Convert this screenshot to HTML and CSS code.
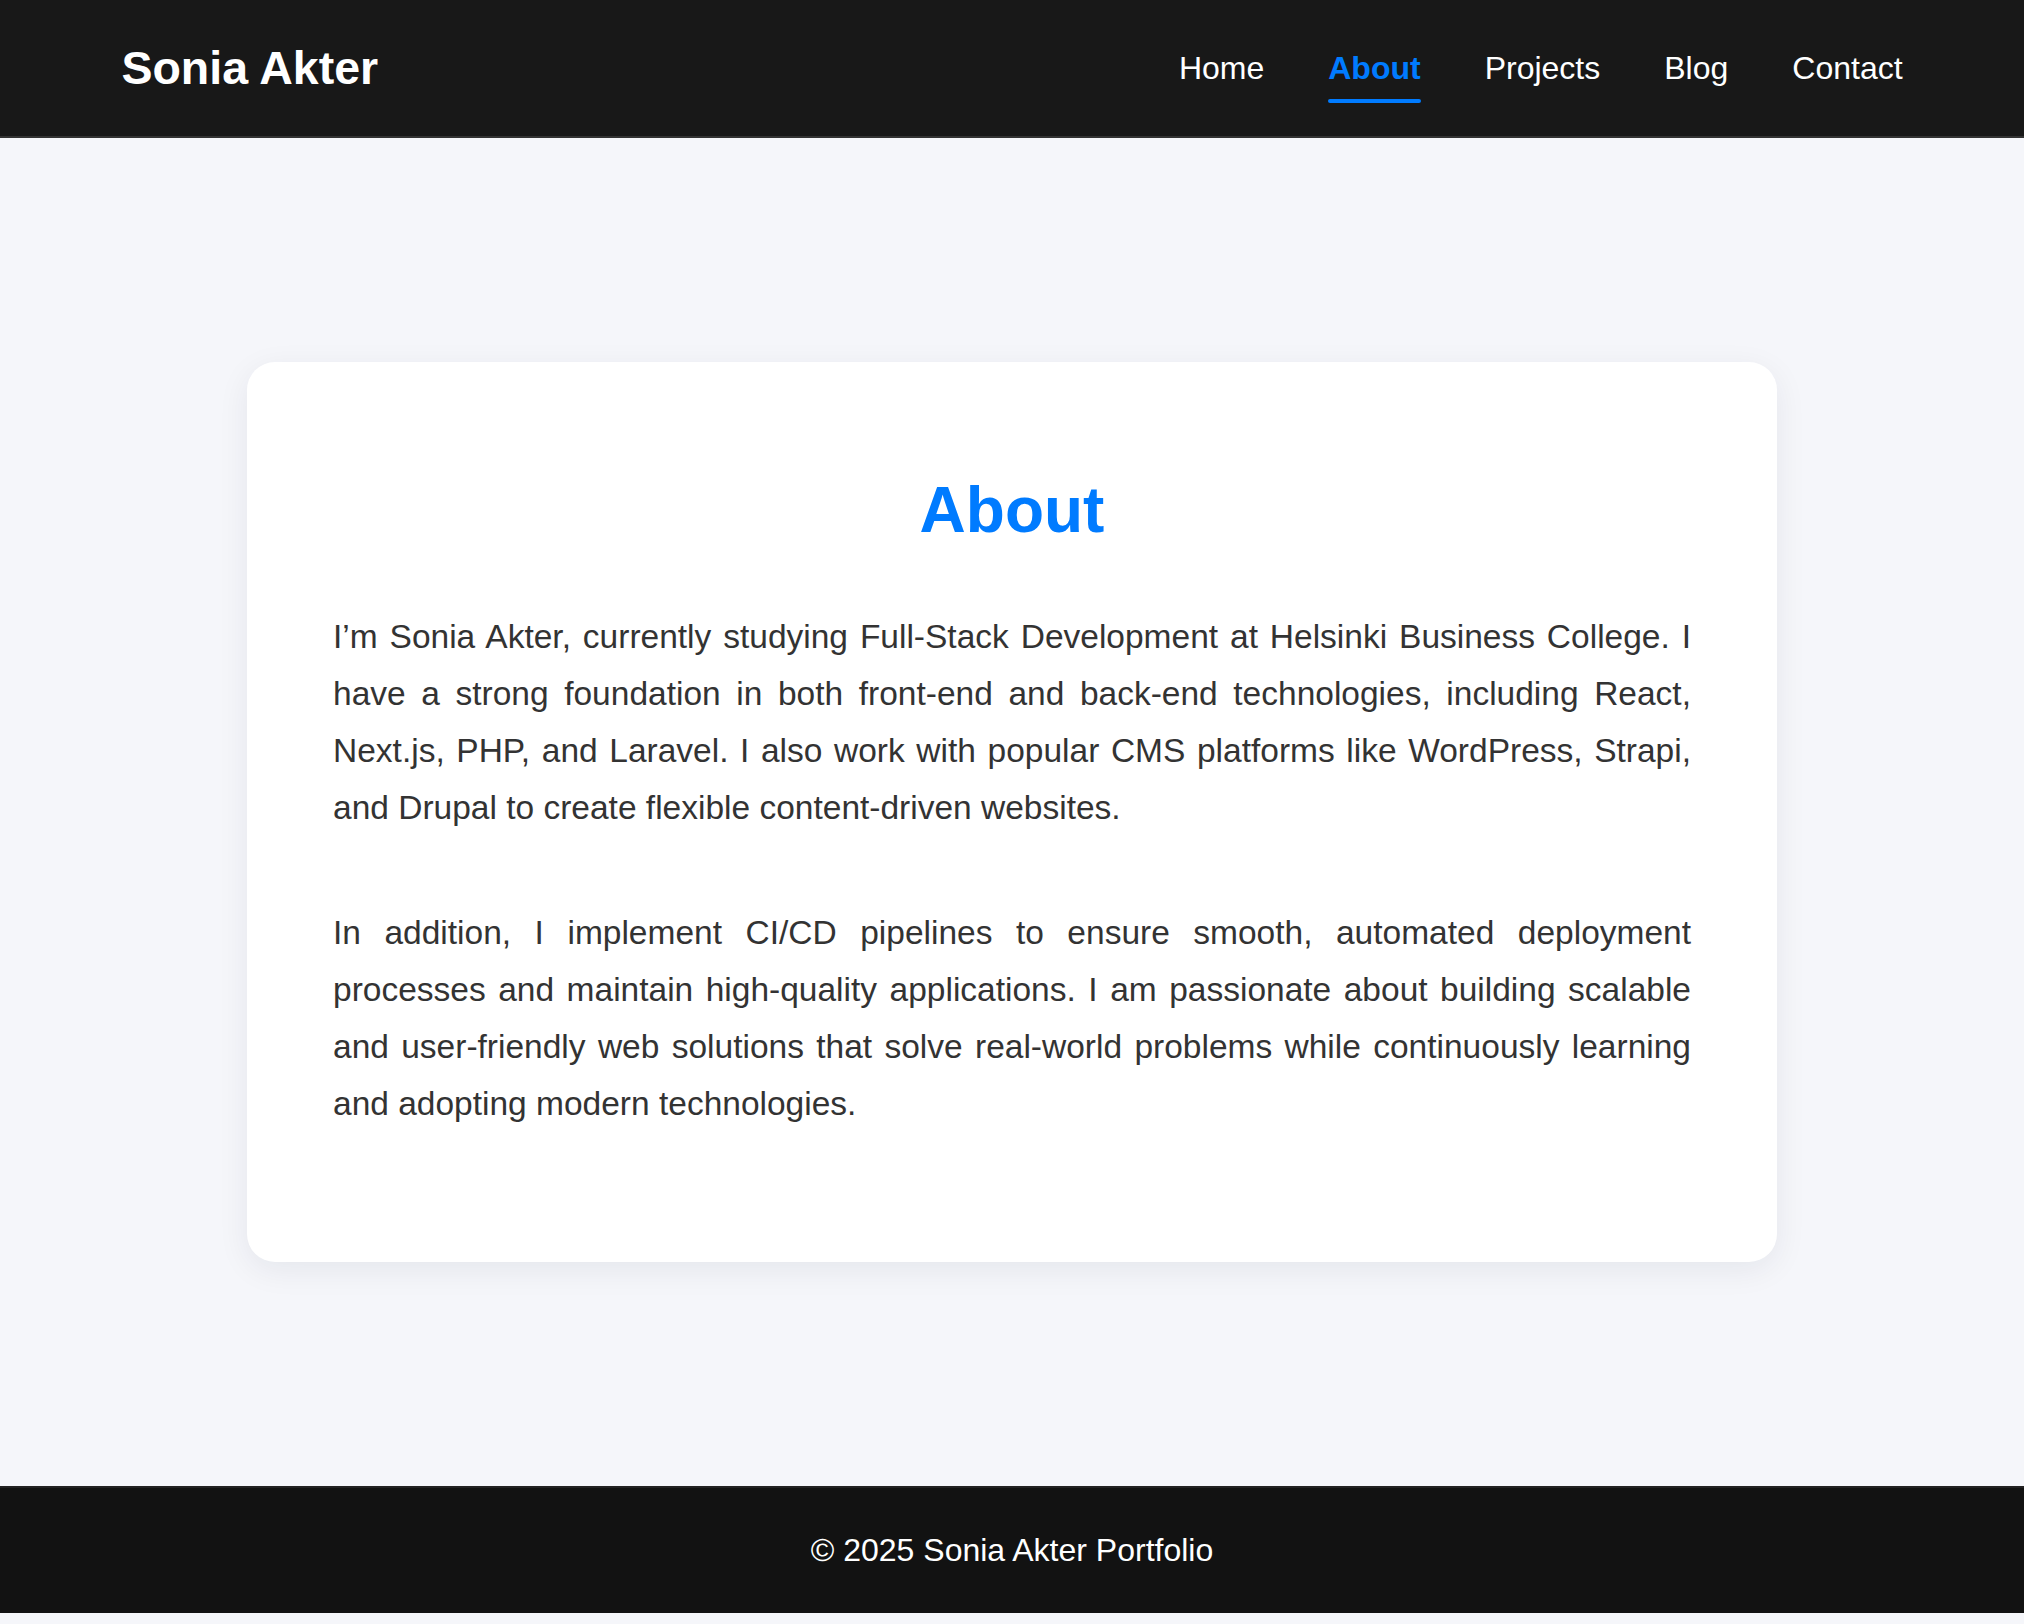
FILE: index.html
```html
<!DOCTYPE html>
<html lang="en">
<head>
<meta charset="utf-8">
<title>About - Sonia Akter</title>
<link rel="stylesheet" href="styles.css">
</head>
<body>
<header class="site-header">
  <div class="logo">Sonia Akter</div>
  <nav class="main-nav">
    <ul class="nav-list">
      <li><a href="#" class="nav-link">Home</a></li>
      <li><a href="#" class="nav-link active">About</a></li>
      <li><a href="#" class="nav-link">Projects</a></li>
      <li><a href="#" class="nav-link">Blog</a></li>
      <li><a href="#" class="nav-link">Contact</a></li>
    </ul>
  </nav>
</header>
<main class="content">
  <section class="card">
    <h2 class="card-title">About</h2>
    <p class="card-text">I’m Sonia Akter, currently studying Full-Stack Development at Helsinki Business College. I have a strong foundation in both front-end and back-end technologies, including React, Next.js, PHP, and Laravel. I also work with popular CMS platforms like WordPress, Strapi, and Drupal to create flexible content-driven websites.</p>
    <p class="card-text">In addition, I implement CI/CD pipelines to ensure smooth, automated deployment processes and maintain high-quality applications. I am passionate about building scalable and user-friendly web solutions that solve real-world problems while continuously learning and adopting modern technologies.</p>
  </section>
</main>
<footer class="site-footer">
  <p class="footer-text">© 2025 Sonia Akter Portfolio</p>
</footer>
</body>
</html>
```
FILE: styles.css
```css
* {
  box-sizing: border-box;
}

body {
  margin: 0;
  padding-bottom: 11px;
  background: #f5f6fa;
  font-family: "Liberation Sans", Arial, Helvetica, sans-serif;
  color: #333;
}

.site-header {
  height: 138px;
  background: #181818;
  border-bottom: 2px solid #333;
  display: flex;
  align-items: center;
  justify-content: space-between;
  padding: 0 6%;
}

.logo {
  color: #fff;
  font-size: 46.5px;
  font-weight: 700;
}

.nav-list {
  list-style: none;
  margin: 0;
  padding: 0;
  display: flex;
  gap: 64px;
}

.nav-link {
  position: relative;
  display: block;
  color: #fff;
  text-decoration: none;
  font-size: 32px;
}

.nav-link.active {
  color: #007bff;
  font-weight: 700;
}

.nav-link.active::after {
  content: "";
  position: absolute;
  left: 0;
  right: 0;
  bottom: -16px;
  height: 4px;
  border-radius: 2px;
  background: #007bff;
}

.content {
  padding: 224px 0;
}

.card {
  width: 1530px;
  margin: 0 auto;
  background: #fff;
  border-radius: 28px;
  padding: 64px 86px 61px;
  box-shadow: 0 8px 32px rgba(20, 30, 60, 0.07);
}

.card-title {
  margin: 47px 0 62px;
  text-align: center;
  color: #007bff;
  font-size: 64px;
  font-weight: 700;
  line-height: normal;
}

.card-text {
  margin: 0 0 68px;
  font-size: 33.5px;
  line-height: 1.7;
  text-align: justify;
  color: #333;
}

.site-footer {
  background: #121212;
  border-top: 2px solid #222;
  padding: 44px 0;
  text-align: center;
}

.footer-text {
  margin: 0;
  color: #fff;
  font-size: 32px;
  line-height: 37px;
}
```
